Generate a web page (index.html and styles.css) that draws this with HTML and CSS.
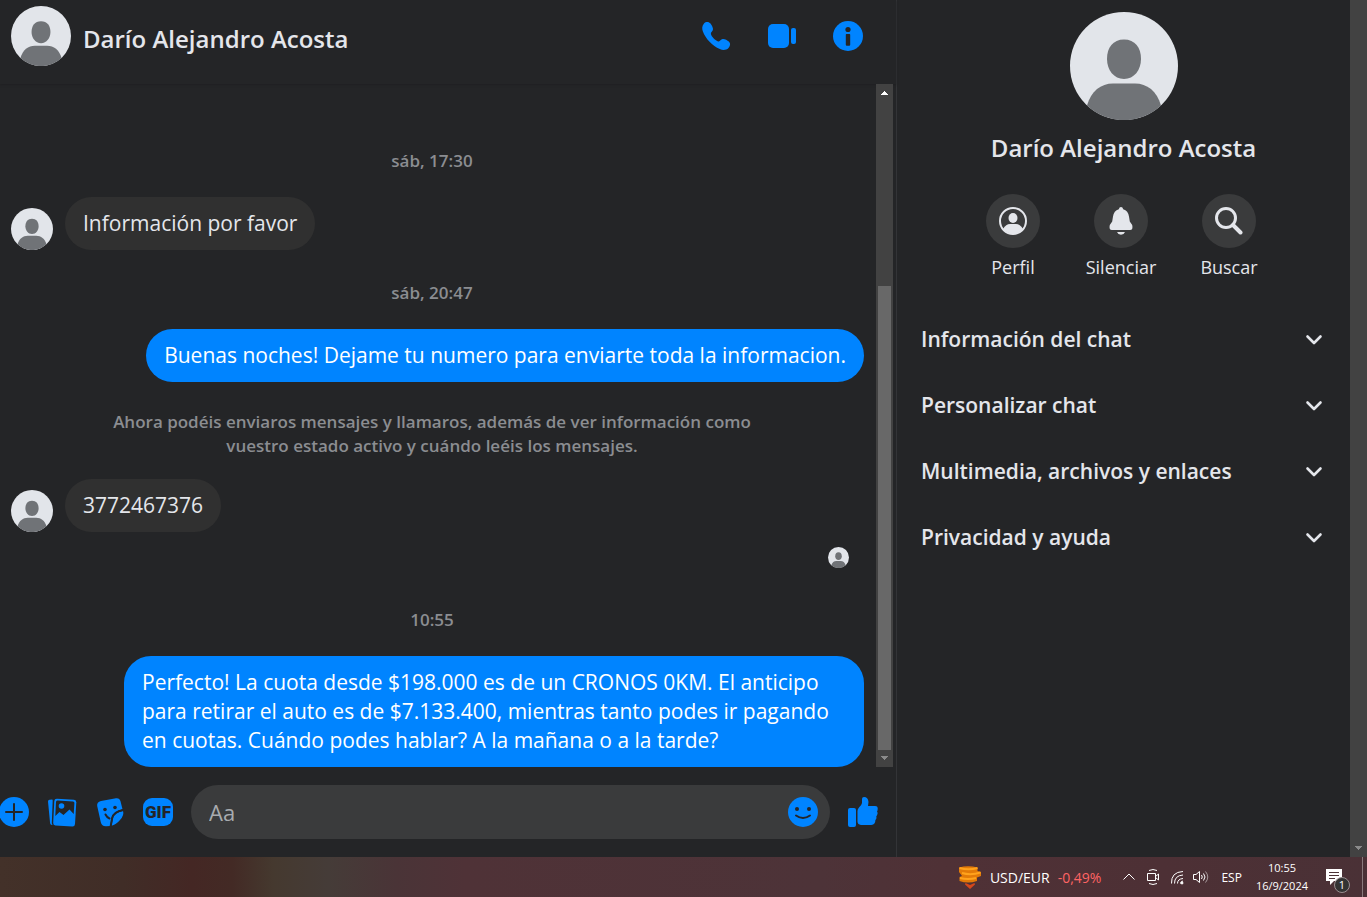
FILE: index.html
```html
<!DOCTYPE html>
<html lang="es">
<head>
  <meta charset="UTF-8">
  <meta name="viewport" content="width=device-width, initial-scale=1.0">
  <title>Darío Alejandro Acosta</title>
  <link rel="stylesheet" href="styles.css">
</head>
<body>
  <svg class="defs" aria-hidden="true">
    <symbol id="avatar" viewBox="0 0 108 108">
      <circle cx="54" cy="54" r="54" fill="#e2e5ea"/>
      <path d="M54 27.500c11 0 17 8 17 19.500 0 11-7 20-17 20s-17-9-17-20c0-11.500 6-19.500 17-19.500z" fill="#707377"/>
      <path d="M17 93.500C21 79 31 71.500 43 71.500h22c12 0 22 7.500 26 22A54 54 0 0 1 17 93.500z" fill="#707377"/>
    </symbol>
    <symbol id="chevron" viewBox="0 0 18 18">
      <path d="M2.500 6.500L9 13l6.500-6.500" fill="none" stroke="#e4e6eb" stroke-width="2.600" stroke-linecap="round" stroke-linejoin="round"/>
    </symbol>
  </svg>

  <div class="window">
    <main class="chat">
      <header class="chat-header">
        <svg class="avatar-header"><use href="#avatar"/></svg>
        <h1>Darío Alejandro Acosta</h1>
        <div class="chat-actions">
          <button type="button" aria-label="Llamar">
            <svg viewBox="0 0 30 30"><path d="M3 2.500C4.800.500 8 .600 9.500 2.600c1.300 1.700 3 4.500 2.400 6.500-.500 1.700-2.300 2.200-2 3.900.5 2.600 4.700 6.700 7.300 7.400 1.800.5 2.400-2 4.400-2.300 2.100-.3 4.700 1.300 6.200 2.500 2 1.600 1.600 4.400-.3 6.300-2.300 2.300-5.600 2.500-8.700 1.100C11.500 25.300 4.500 17.500 1.900 10.500.900 7.700.800 5 3 2.500z"/></svg>
          </button>
          <button type="button" aria-label="Videollamada">
            <svg viewBox="0 0 30 30"><rect x="1" y="3" width="21" height="24" rx="5"/><rect x="24" y="7" width="5" height="16" rx="2"/></svg>
          </button>
          <button type="button" aria-label="Información">
            <svg viewBox="0 0 30 30"><circle cx="15" cy="15" r="15"/><circle cx="15" cy="8.500" r="2.600" class="cut"/><path class="cut" d="M13.500 13h3q.7 0 .7.700v10q0 1-1 1h-2.400q-1 0-1-1v-10q0-.7.700-.7z"/></svg>
          </button>
        </div>
      </header>

      <div class="conversation">
        <div class="messages">
          <p class="time">sáb, 17:30</p>
          <div class="message received">
            <svg class="avatar-message"><use href="#avatar"/></svg>
            <p class="bubble">Información por favor</p>
          </div>
          <p class="time">sáb, 20:47</p>
          <div class="message sent">
            <p class="bubble">Buenas noches! Dejame tu numero para enviarte toda la informacion.</p>
          </div>
          <p class="notice">Ahora podéis enviaros mensajes y llamaros, además de ver información como vuestro estado activo y cuándo leéis los mensajes.</p>
          <div class="message received">
            <svg class="avatar-message"><use href="#avatar"/></svg>
            <p class="bubble">3772467376</p>
          </div>
          <svg class="avatar-seen"><use href="#avatar"/></svg>
          <p class="time">10:55</p>
          <div class="message sent">
            <p class="bubble">Perfecto! La cuota desde $198.000 es de un CRONOS 0KM. El anticipo para retirar el auto es de $7.133.400, mientras tanto podes ir pagando en cuotas. Cuándo podes hablar? A la mañana o a la tarde?</p>
          </div>
        </div>
        <div class="scrollbar" aria-hidden="true">
          <svg viewBox="0 0 17 17" shape-rendering="crispEdges"><path fill="#fff" d="M8 7h1v1h1v1h1v1h1v1H5v-1h1V9h1V8h1z"/></svg>
          <div class="thumb"></div>
          <svg viewBox="0 0 17 17" shape-rendering="crispEdges"><path fill="#8a8a8a" d="M5 6h7v1h-1v1h-1v1H9v1H8V9H7V8H6V7H5z"/></svg>
        </div>
      </div>

      <form class="composer">
        <button type="button" aria-label="Más acciones">
          <svg viewBox="0 0 30 30"><circle cx="15" cy="15" r="15"/><path class="cut-line" d="M15 7v16M7 15h16"/></svg>
        </button>
        <button type="button" aria-label="Adjuntar foto">
          <svg viewBox="0 0 30 30">
            <path d="M1 4.500Q1 3 2.500 2.800L5 2.500q.8 0 .7 1L4.800 26q0 1 .8 2H5q-1.700 0-1.900-1.700z"/>
            <path d="M10 1.700l17 1q2.400.2 2.300 2.600L28 27q-.2 2.600-2.600 2.500l-17-1q-2.300-.2-2.200-2.600L7.300 4q.2-2.400 2.700-2.300z"/>
            <path class="cut" d="M10.500 3.500l15.500 1q1.500.1 1.400 1.600L26.700 17 22.500 12.500 16.500 18 12.500 15 8.300 19 9 5Q9 3.400 10.500 3.500z"/>
            <circle cx="14.500" cy="9" r="2.800"/>
          </svg>
        </button>
        <button type="button" aria-label="Elegir un sticker">
          <svg viewBox="0 0 30 30">
            <path d="M6 4L21 1.200q3.500-.5 4.500 3l2 8Q19 14 16.500 20.500L15.300 29l-4 .3q-4.500.3-5.500-4L2.200 9Q1.600 5 6 4z"/>
            <path d="M28 14q1.500 4-3 9-4 4.800-8.500 5.800L18 21q2-5.500 10-7z"/>
            <path class="cut-line" d="M28 13q-9 1.500-10.800 8L15.700 29"/>
            <circle class="cut" cx="10" cy="12.500" r="1.800"/><circle class="cut" cx="20" cy="10.500" r="1.800"/>
            <path class="cut-line" d="M10.500 17.500q1.500 3 4 4"/>
          </svg>
        </button>
        <button type="button" class="gif">GIF</button>
        <div class="text-box">
          <input type="text" aria-label="Mensaje" placeholder="Aa">
          <button type="button" aria-label="Elegir un emoji">
            <svg viewBox="0 0 30 30"><circle cx="15" cy="15" r="15"/><circle class="cut" cx="9" cy="12" r="2"/><circle class="cut" cx="21" cy="12" r="2"/><path class="cut-line" d="M8 18.500q7 5 14 0"/></svg>
          </button>
        </div>
        <button type="button" aria-label="Enviar Me gusta">
          <svg viewBox="0 0 30 30"><rect x="0" y="11" width="8" height="19" rx="2"/><path d="M14 2q0-2 2-2 4 0 4.500 5l-.5 4h7q3 0 2.700 3 0 1.500-.7 2.500 1.200 1.500 0 3.500-.200 1-.800 1.500.800 2-.800 3.500 0 4.500-4 5H13q-3.500-.5-3.500-3.500V14q0-2 1.500-3.500 2.500-2 3-4.500z"/></svg>
        </button>
      </form>
    </main>

    <aside class="details">
      <svg class="avatar-large"><use href="#avatar"/></svg>
      <h2>Darío Alejandro Acosta</h2>
      <div class="shortcuts">
        <button type="button">
          <span class="circle"><svg viewBox="0 0 28 28"><circle cx="14" cy="14" r="13" fill="none" stroke="#e4e6eb" stroke-width="2"/><ellipse cx="14" cy="11" rx="4.500" ry="5"/><path d="M4 22q3-5 7-5h6q4 0 7 5a13 13 0 0 1-20 0z"/></svg></span>
          Perfil
        </button>
        <button type="button">
          <span class="circle"><svg viewBox="0 0 28 28"><path d="M14 0q1.700 0 2.200 2.200 5 1.600 5.800 7.300l.8 5 2.400 3.500q1.200 5-2.200 5H5q-3.400 0-2.200-5l2.400-3.500.8-5q.8-5.700 5.800-7.300Q12.300 0 14 0zM10 25h8q-1 2.700-4 2.700T10 25z"/></svg></span>
          Silenciar
        </button>
        <button type="button">
          <span class="circle"><svg viewBox="0 0 28 28"><circle cx="11" cy="11" r="9.500" fill="none" stroke="#e4e6eb" stroke-width="3"/><path d="M18 18l2 2M20.500 20.500l5 5" fill="none" stroke="#e4e6eb" stroke-width="4" stroke-linecap="round"/></svg></span>
          Buscar
        </button>
      </div>
      <div class="options">
        <button type="button">Información del chat <svg><use href="#chevron"/></svg></button>
        <button type="button">Personalizar chat <svg><use href="#chevron"/></svg></button>
        <button type="button">Multimedia, archivos y enlaces <svg><use href="#chevron"/></svg></button>
        <button type="button">Privacidad y ayuda <svg><use href="#chevron"/></svg></button>
      </div>
    </aside>

    <div class="page-scrollbar" aria-hidden="true">
      <svg viewBox="0 0 17 17" shape-rendering="crispEdges"><path fill="#8a8a8a" d="M5 6h7v1h-1v1h-1v1H9v1H8V9H7V8H6V7H5z"/></svg>
    </div>
  </div>

  <footer class="taskbar">
    <button type="button" class="rates">
      <svg viewBox="0 0 24 24">
        <path fill="#d5481c" d="M7.500 18l4.500 2 4.500-2 .5 1.500-5 4.500-5-4.500z"/>
        <path fill="#e27a08" d="M1 2.500Q10 0 19.500 2.500V6l3.500 1v4l-4 1.500V16q-9 3-17.500 0v-4L4 11 1 7z"/>
        <path d="M1.500 3q9 2.500 18 0M4 8q9 2.500 18.500-.5M2 13q8 2 16 0" fill="none" stroke="#ffa21c" stroke-width="2"/>
      </svg>
      <span>USD/EUR</span>
      <span class="change">-0,49%</span>
    </button>
    <div class="tray">
      <button type="button" aria-label="Mostrar iconos ocultos"><svg viewBox="0 0 16 16"><path d="M2.500 10.500L8 5l5.500 5.500"/></svg></button>
      <button type="button" aria-label="Reunirse ahora"><svg viewBox="0 0 16 16"><path d="M2.500 4.500h8v7h-8zM10.500 7.500L13.500 5v6l-3-2.500M4 1.500Q8-.5 12 1.500M4 14.500q4 2 8 0"/></svg></button>
      <button type="button" aria-label="Red"><svg viewBox="0 0 16 16"><path d="M2.500 14.500Q2 3 14 2.500M5.500 14.500q0-8 8.500-8.500M8.500 14.500q0-4.500 5.500-5M11.500 14.500q0-2 2.500-2.500"/><circle cx="13" cy="14" r="1" fill="#fff"/></svg></button>
      <button type="button" aria-label="Volumen"><svg viewBox="0 0 16 16"><path d="M.5 5.500H3L6.500 2.500v11L3 10.500H.5zM8.500 6q1.500 2 0 4M10.500 4.500q3 3.500 0 7"/><path d="M12.500 2.500q4.500 5.500 0 11" opacity=".5"/></svg></button>
    </div>
    <span class="lang">ESP</span>
    <div class="clock"><span>10:55</span><span>16/9/2024</span></div>
    <button type="button" class="notifications" aria-label="Notificaciones">
      <svg viewBox="0 0 16 16"><path fill="#fff" d="M0 0h16v12H8l-4 4v-4H0z"/><path stroke="#4c3237" d="M3 3.500h10M3 6.500h10M3 9.500h6"/></svg>
      <span class="badge">1</span>
    </button>
    <div class="show-desktop"></div>
  </footer>
</body>
</html>
```

FILE: styles.css
```css
* {
  box-sizing: border-box;
}
body {
  background-color: #242527;
  color: #e4e6eb;
  font-family: "Segoe UI", "Open Sans", "Noto Sans", sans-serif;
  margin: 0;
  min-height: 100vh;
  display: flex;
  flex-direction: column;
}
h1, h2, p {
  margin: 0;
}
h1, h2 {
  font-size: 24px;
  font-weight: 600;
  line-height: 30px;
}
button {
  background: none;
  border: none;
  color: inherit;
  font-family: inherit;
  padding: 0;
  cursor: pointer;
}
svg {
  display: block;
  flex-shrink: 0;
}
.defs {
  position: absolute;
  width: 0;
  height: 0;
}
.window {
  flex: 1;
  display: flex;
}

/* chat */
.chat {
  flex: 1;
  min-width: 0;
  display: flex;
  flex-direction: column;
  border-right: 1px solid #333437;
}
.chat button svg {
  width: 30px;
  height: 30px;
  fill: #0084ff;
}
.chat svg .cut {
  fill: #242527;
}
.chat svg .cut-line {
  fill: none;
  stroke: #242527;
  stroke-width: 2;
  stroke-linecap: round;
}
.chat-header {
  display: flex;
  align-items: center;
  height: 84px;
  padding: 0 33px 12px 11px;
  box-shadow: 0 1px 2px #1f2022;
}
.avatar-header {
  width: 60px;
  height: 60px;
  margin-right: 12px;
}
.chat-header h1 {
  padding-top: 6px;
}
.chat-actions {
  display: flex;
  gap: 36px;
  margin-left: auto;
}
.conversation {
  flex: 1;
  display: flex;
  padding-right: 3px;
}
.messages {
  flex: 1;
  display: flex;
  flex-direction: column;
  justify-content: flex-end;
  padding-right: 12px;
}
.time, .notice {
  color: #8b8d91;
  font-size: 17px;
  font-weight: 600;
  line-height: 24px;
  text-align: center;
}
.time {
  margin: 31px 0 24px;
}
.notice {
  max-width: 660px;
  margin: 28px auto 21px;
}
.message {
  display: flex;
  align-items: flex-end;
}
.received {
  padding-left: 11px;
  gap: 12px;
}
.sent {
  justify-content: flex-end;
}
.avatar-message {
  width: 42px;
  height: 42px;
}
.avatar-seen {
  width: 21px;
  height: 21px;
  margin: 15px 15px 9px auto;
}
.bubble {
  max-width: 740px;
  padding: 12px 18px;
  border-radius: 27px;
  background-color: #303030;
  font-size: 21px;
  line-height: 29px;
}
.sent .bubble {
  background-color: #0084ff;
  color: #fff;
}
.scrollbar, .page-scrollbar {
  width: 17px;
  background-color: #424242;
  display: flex;
  flex-direction: column;
  justify-content: space-between;
}
.scrollbar svg, .page-scrollbar svg {
  width: 17px;
  height: 17px;
}
.scrollbar .thumb {
  height: 68%;
  margin: auto 2px 0;
  background-color: #686868;
}
.page-scrollbar {
  justify-content: flex-end;
}

/* composer */
.composer {
  display: flex;
  align-items: center;
  gap: 18px;
  height: 90px;
  padding-right: 18px;
}
.composer > button:first-child {
  margin-left: -1px;
}
.chat .gif {
  width: 30px;
  height: 28px;
  border-radius: 9px;
  background-color: #0084ff;
  color: #242527;
  font-family: Roboto, sans-serif;
  font-size: 17px;
  font-weight: 900;
  line-height: 28px;
}
.text-box {
  flex: 1;
  display: flex;
  align-items: center;
  height: 54px;
  padding: 0 12px 0 18px;
  border-radius: 27px;
  background-color: #3a3b3c;
}
.text-box input {
  flex: 1;
  min-width: 0;
  padding: 0;
  background: none;
  border: none;
  outline: none;
  color: #e4e6eb;
  font-family: inherit;
  font-size: 22px;
}
.text-box input::placeholder {
  color: #a8abaf;
  opacity: 1;
}

/* contact panel */
.details {
  width: 453px;
  padding: 12px 0;
  display: flex;
  flex-direction: column;
  align-items: center;
}
.avatar-large {
  width: 108px;
  height: 108px;
}
.details h2 {
  margin: 13px 0 31px;
}
.shortcuts {
  display: flex;
  padding-right: 5px;
}
.shortcuts button {
  width: 108px;
  font-size: 18px;
  line-height: 24px;
}
.shortcuts .circle {
  display: flex;
  align-items: center;
  justify-content: center;
  width: 54px;
  height: 54px;
  margin: 0 auto 7px;
  border-radius: 50%;
  background-color: #3a3b3c;
}
.shortcuts svg {
  width: 28px;
  height: 28px;
  fill: #e4e6eb;
}
.options {
  align-self: stretch;
  margin-top: 27px;
  padding: 0 27px 0 24px;
}
.options button {
  display: flex;
  align-items: center;
  justify-content: space-between;
  width: 100%;
  height: 66px;
  font-size: 21px;
  font-weight: 600;
}
.options svg {
  width: 18px;
  height: 18px;
}

/* taskbar */
.taskbar {
  display: flex;
  align-items: center;
  justify-content: flex-end;
  height: 40px;
  padding-right: 4px;
  background: linear-gradient(90deg, #433129 0, #402d27 9%, #442724 14%, #432a25 17%, #45392f 20%, #453c38 24%, #4a3437 29%, #4f3237 34%, #4d3338 60%, #4f3136 69%, #4d3035 85%, #4a3136 100%);
  color: #fff;
  font-size: 12px;
}
.rates {
  display: flex;
  align-items: center;
  gap: 8px;
  margin-right: 20px;
  font-size: 14px;
}
.rates svg {
  width: 24px;
  height: 24px;
}
.change {
  color: #ff6464;
}
.tray {
  display: flex;
  gap: 8px;
}
.tray svg {
  width: 16px;
  height: 16px;
  fill: none;
  stroke: #fff;
}
.lang {
  margin: 0 14px 0 12px;
}
.clock {
  display: flex;
  flex-direction: column;
  align-items: center;
  font-size: 11px;
  line-height: 18px;
}
.notifications {
  position: relative;
  display: flex;
  align-items: flex-start;
  width: 24px;
  height: 24px;
  margin: 8px 12px 0 18px;
}
.notifications svg {
  width: 16px;
  height: 16px;
}
.badge {
  position: absolute;
  right: 0;
  bottom: 0;
  width: 16px;
  height: 16px;
  border: 1px solid #9a8f91;
  border-radius: 50%;
  background-color: #333;
  font-size: 11px;
  line-height: 14px;
}
.show-desktop {
  width: 1px;
  height: 40px;
  background-color: #8a7a7d;
}
```
